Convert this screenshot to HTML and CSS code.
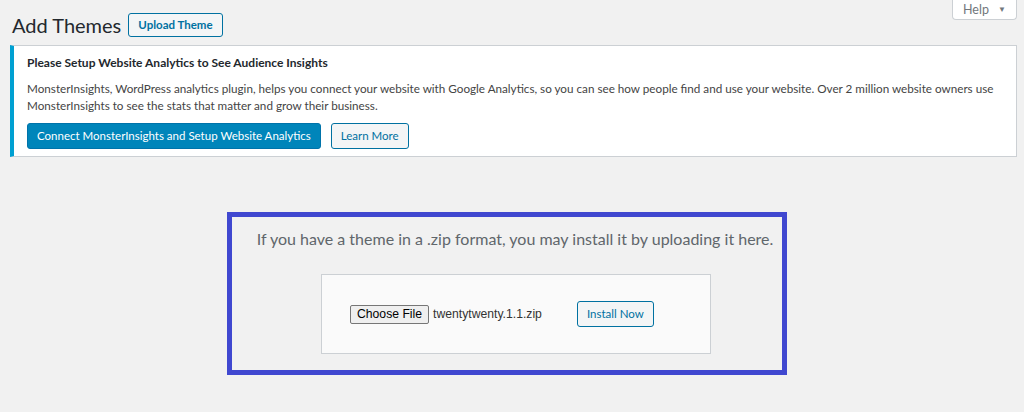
FILE: index.html
```html
<!DOCTYPE html>
<html lang="en">
<head>
    <meta charset="UTF-8">
    <title>Add Themes</title>
    <link rel="stylesheet" href="styles.css">
</head>
<body>
    <div class="wrap">
        <div class="page-head">
            <h1>Add Themes</h1>
            <a class="page-title-action" href="#">Upload Theme</a>
            <button class="help-tab">Help <span class="caret">&#9660;</span></button>
        </div>

        <div class="notice">
            <h2>Please Setup Website Analytics to See Audience Insights</h2>
            <p>MonsterInsights, WordPress analytics plugin, helps you connect your website with Google Analytics, so you can see how people find and use your website. Over 2 million website owners use MonsterInsights to see the stats that matter and grow their business.</p>
            <div class="notice-actions">
                <a class="button button-primary" href="#">Connect MonsterInsights and Setup Website Analytics</a>
                <a class="button" href="#">Learn More</a>
            </div>
        </div>

        <div class="upload-frame">
            <p class="install-help">If you have a theme in a .zip format, you may install it by uploading it here.</p>
            <form class="upload-form">
                <span class="file-button">Choose File</span>
                <span class="file-name">twentytwenty.1.1.zip</span>
                <span class="button install-button">Install Now</span>
            </form>
        </div>
    </div>
</body>
</html>
```

FILE: styles.css
```css
body {
    margin: 0;
    background-color: #f1f1f1;
    font-family: Lato, "Open Sans", sans-serif;
    font-size: 12px;
    color: #444;
}
.wrap {
    margin: 0 7px 0 10px;
}

.page-head {
    display: flex;
    align-items: flex-start;
    height: 45px;
}
.page-head h1 {
    margin: 10px 0 0 2px;
    font-size: 20px;
    font-weight: 400;
    line-height: 30px;
    color: #23282d;
}
.page-title-action {
    margin: 13px 0 0 7px;
    padding: 0 9px;
    height: 22px;
    line-height: 22px;
    border: 1px solid #0071a1;
    border-radius: 3px;
    background: #f3f5f6;
    color: #0071a1;
    font-size: 11.5px;
    font-weight: 700;
    text-decoration: none;
}
.help-tab {
    margin-left: auto;
    width: 65px;
    height: 20px;
    padding: 0;
    border: 1px solid #ccd0d4;
    border-top: none;
    border-radius: 0 0 4px 4px;
    background: #fff;
    color: #72777c;
    font-family: inherit;
    font-size: 12.5px;
    line-height: 18px;
}
.help-tab .caret {
    font-size: 8px;
    margin-left: 6px;
    vertical-align: 2px;
}

.notice {
    background: #fff;
    border: 1px solid #ccd0d4;
    border-left: 4px solid #00a0d2;
    padding: 8px 12px 7px 13px;
}
.notice h2 {
    margin: 0;
    font-size: 12px;
    font-weight: 700;
    line-height: 18px;
    color: #23282d;
}
.notice p {
    margin: 8px 0 9px;
    font-size: 11.7px;
    line-height: 17px;
    color: #444;
}
.notice-actions {
    display: flex;
    gap: 10px;
}
.button {
    display: inline-block;
    height: 24px;
    line-height: 24px;
    padding: 0 9px;
    border: 1px solid #0071a1;
    border-radius: 3px;
    background: #f3f5f6;
    color: #0071a1;
    font-size: 11.5px;
    text-decoration: none;
    white-space: nowrap;
}
.button-primary {
    background: #0085ba;
    border-color: #0073aa;
    color: #fff;
}

.upload-frame {
    width: 550px;
    margin: 55px 0 0 217px;
    border: 5px solid #4048d0;
    padding: 0 0 16px;
}
.install-help {
    margin: 0;
    padding: 11px 0 24px 16px;
    font-size: 16px;
    line-height: 22px;
    text-align: center;
    white-space: nowrap;
    color: #60666b;
}
.upload-form {
    display: flex;
    align-items: center;
    width: 332px;
    height: 78px;
    margin: 0 0 0 89px;
    padding: 0 28px;
    border: 1px solid #ccd0d4;
    background: #fafafa;
}
.file-button {
    padding: 1px 6px;
    line-height: 15px;
    border: 1px solid #767676;
    border-radius: 2px;
    background: #efefef;
    font-family: "Liberation Sans", Arial, sans-serif;
    font-size: 12.2px;
    color: #000;
}
.file-name {
    margin-left: 4px;
    font-family: "Liberation Sans", Arial, sans-serif;
    font-size: 12.2px;
    color: #333;
}
.install-button {
    margin-left: 35px;
    padding: 0 9px;
}
```
